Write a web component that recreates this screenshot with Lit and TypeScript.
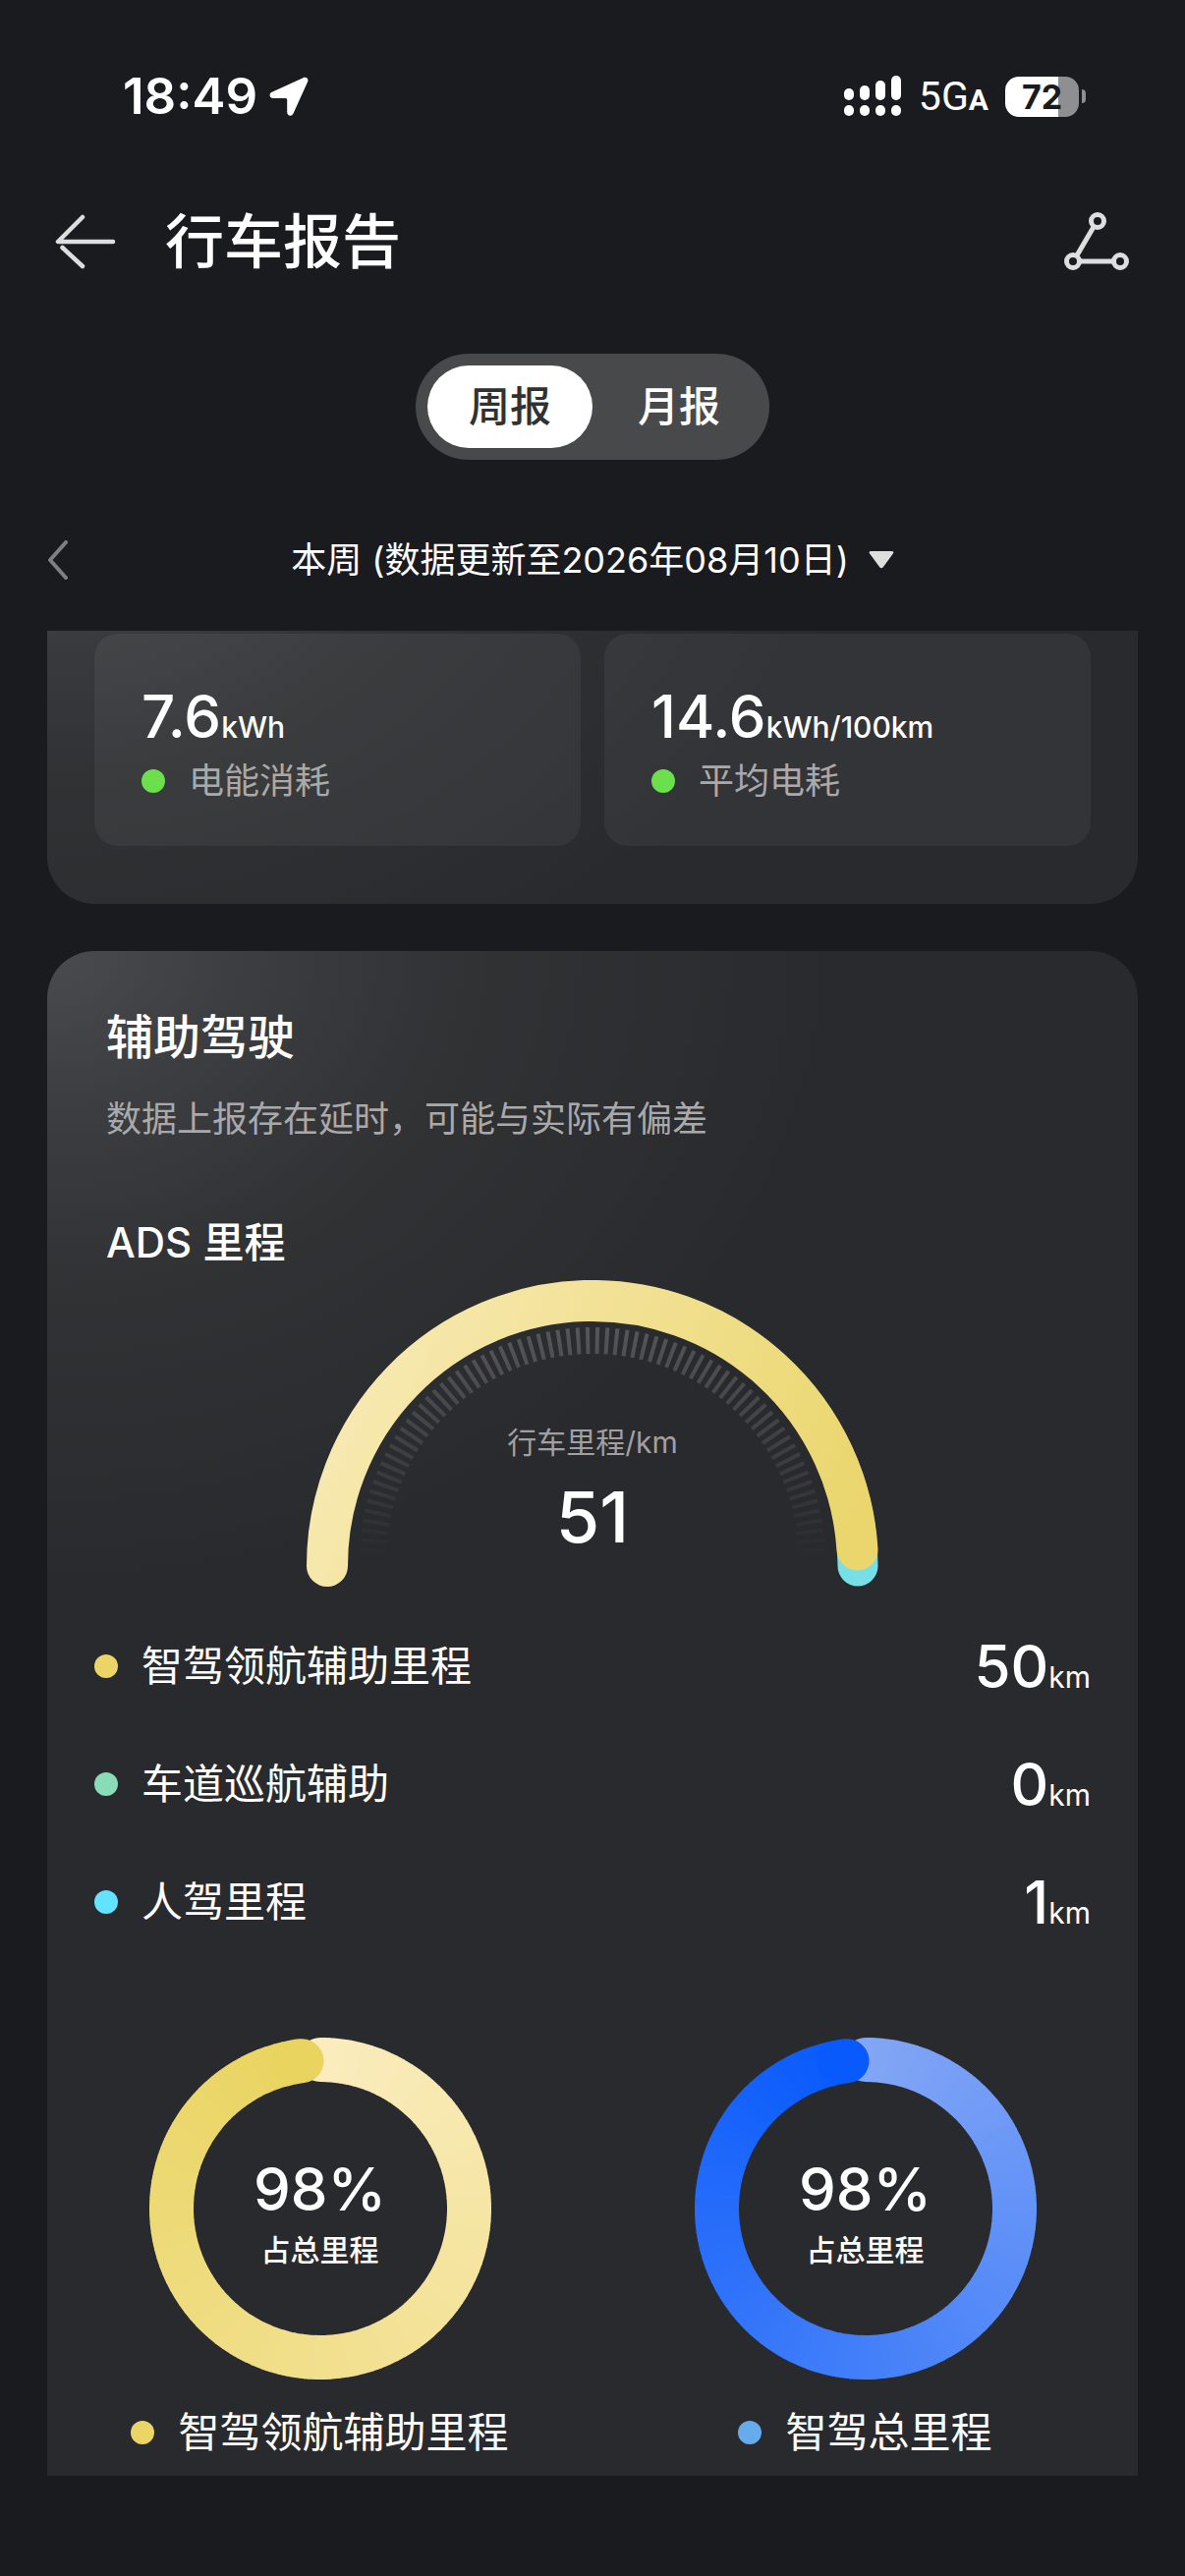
import { LitElement, html, svg, css } from "lit";
import { customElement, property, state } from "lit/decorators.js";
import { classMap } from "lit/directives/class-map.js";

type Rgb = [number, number, number];

const mix = (a: Rgb, b: Rgb, t: number) =>
  `rgb(${a.map((v, i) => Math.round(v + (b[i] - v) * t)).join(",")})`;

/** Point on a circle; 0 degrees is twelve o'clock, growing clockwise. */
const polar = (cx: number, cy: number, r: number, deg: number) => {
  const a = ((deg - 90) * Math.PI) / 180;
  return `${(cx + r * Math.cos(a)).toFixed(2)} ${(cy + r * Math.sin(a)).toFixed(2)}`;
};

const arc = (cx: number, cy: number, r: number, from: number, to: number) =>
  `M${polar(cx, cy, r, from)}A${r} ${r} 0 ${to - from > 180 ? 1 : 0} 1 ${polar(cx, cy, r, to)}`;

@customElement("status-bar")
class StatusBar extends LitElement {
  static styles = css`
    :host {
      display: flex;
      align-items: center;
      justify-content: space-between;
      height: 64px;
      padding: 66px 101px 0 125px;
      color: #fff;
    }
    .side {
      display: flex;
      align-items: center;
    }
    .time {
      font-size: 51px;
      font-weight: 600;
      line-height: 64px;
    }
    .arrow {
      width: 40px;
      height: 40px;
      margin-left: 12px;
    }
    .signal {
      width: 58px;
      height: 42px;
    }
    .network {
      margin-left: 18px;
      font-family: "Roboto", sans-serif;
      font-size: 41px;
      line-height: 64px;
    }
    .network small {
      font-size: 30px;
      font-weight: 700;
      line-height: 30px;
    }
    .battery {
      display: grid;
      place-items: center;
      width: 75px;
      height: 41px;
      margin-left: 17px;
      border-radius: 14px;
      background: linear-gradient(90deg, #fff 72%, #8e8f91 72%);
      color: #1a1b1f;
      font-size: 34px;
      font-weight: 700;
      line-height: 41px;
    }
    .tip {
      width: 4px;
      height: 14px;
      margin-left: 3px;
      border-radius: 0 4px 4px 0;
      background: #8e8f91;
    }
  `;

  render() {
    const bars = [13, 10, 5, 0];
    return html`
      <div class="side">
        <span class="time">18:49</span>
        <svg class="arrow" viewBox="0 0 40 40" aria-hidden="true">
          <path d="M34.5 1.2C37.800 -.3 40.500 2.200 39 5.500L24.500 37.500C23 41 18.200 40 18.200 36.300V23.500Q18.200 22 16.700 22H4C.2 22 -.8 17.300 2.700 15.700Z" fill="#fff" />
        </svg>
      </div>
      <div class="side">
        <svg class="signal" viewBox="0 0 58 42" fill="#fff" aria-hidden="true">
          ${bars.map(
            (y, i) => svg`
              <rect x=${i * 16} y=${y} width="10" height=${25 - y} rx="5" />
              <rect x=${i * 16} y="30" width="10" height="11" rx="5" />`
          )}
        </svg>
        <span class="network">5G<small>A</small></span>
        <span class="battery">72</span>
        <span class="tip"></span>
      </div>
    `;
  }
}

@customElement("mileage-gauge")
class MileageGauge extends LitElement {
  @property({ type: Number }) total = 0;
  @property({ type: Number }) assisted = 0;

  static styles = css`
    :host {
      display: grid;
      justify-items: center;
    }
    .dial,
    .caption {
      grid-area: 1 / 1;
    }
    .dial {
      width: 582px;
      max-width: 100%;
    }
    .caption {
      align-self: end;
      display: grid;
      gap: 16px;
      padding-bottom: 30px;
      text-align: center;
    }
    .label {
      color: #a0a0a2;
      font-size: 30px;
      line-height: 36px;
    }
    .value {
      font-size: 72px;
      font-weight: 500;
      line-height: 84px;
    }
  `;

  render() {
    const end = -90 + 180 * (this.assisted / this.total);
    const count = 72;
    const step = 180 / (count + 1);
    const ticks = Array.from({ length: count }, (_, i) => (i - (count - 1) / 2) * step);
    return html`
      <svg class="dial" viewBox="0 0 582 313" fill="none" aria-hidden="true">
        <defs>
          <linearGradient id="gold" gradientUnits="userSpaceOnUse" x1="30" y1="60" x2="540" y2="290">
            <stop offset="0" stop-color="#f8eab5" />
            <stop offset="1" stop-color="#ead66c" />
          </linearGradient>
          <linearGradient id="fade" gradientUnits="userSpaceOnUse" x1="0" y1="48" x2="0" y2="285">
            <stop offset="0" stop-color="#fff" stop-opacity=".2" />
            <stop offset=".5" stop-color="#fff" stop-opacity=".1" />
            <stop offset="1" stop-color="#fff" stop-opacity="0" />
          </linearGradient>
        </defs>
        <path
          d=${ticks.map((t) => `M${polar(291, 285, 237, t)}L${polar(291, 285, 210, t)}`).join("")}
          stroke="url(#fade)"
          stroke-width="4"
        />
        <path d=${arc(291, 291, 270, 60, 90)} stroke="#77dfe6" stroke-width="41" stroke-linecap="round" />
        <path d=${arc(291, 291, 270, -90, end)} stroke="url(#gold)" stroke-width="42" stroke-linecap="round" />
      </svg>
      <div class="caption">
        <span class="label">行车里程/km</span>
        <span class="value">${this.total}</span>
      </div>
    `;
  }
}

@customElement("share-ring")
class ShareRing extends LitElement {
  @property({ type: Number }) percent = 0;
  @property() label = "";
  @property({ attribute: false }) from: Rgb = [0, 0, 0];
  @property({ attribute: false }) to: Rgb = [0, 0, 0];
  @property() dot = "";

  static styles = css`
    :host {
      display: grid;
      justify-items: center;
      gap: 24px;
    }
    .chart {
      display: grid;
      place-items: center;
    }
    .ring,
    .caption {
      grid-area: 1 / 1;
    }
    .ring {
      width: 348px;
      max-width: 100%;
    }
    .caption {
      display: grid;
      gap: 8px;
      padding-top: 4px;
      text-align: center;
    }
    .value {
      font-size: 60px;
      font-weight: 500;
      line-height: 72px;
    }
    .note {
      font-size: 30px;
      font-weight: 500;
      line-height: 36px;
    }
    .legend {
      display: flex;
      align-items: center;
      gap: 24px;
      font-size: 42px;
      line-height: 60px;
    }
    .dot {
      width: 24px;
      height: 24px;
      border-radius: 50%;
    }
  `;

  render() {
    const sweep = this.percent * 3.6;
    const count = 120;
    const seg = sweep / count;
    return html`
      <div class="chart">
        <svg class="ring" viewBox="0 0 348 348" fill="none" aria-hidden="true">
          <path d=${arc(174, 174, 151.5, 0, 1)} stroke=${mix(this.from, this.to, 0)} stroke-width="45" stroke-linecap="round" />
          ${Array.from({ length: count }, (_, i) => {
            const last = i === count - 1;
            return svg`<path
              d=${arc(174, 174, 151.5, i * seg, (i + 1) * seg + (last ? 0 : 0.4))}
              stroke=${mix(this.from, this.to, i / (count - 1))}
              stroke-width="45"
              stroke-linecap=${last ? "round" : "butt"} />`;
          })}
        </svg>
        <div class="caption">
          <span class="value">${this.percent}%</span>
          <span class="note">占总里程</span>
        </div>
      </div>
      <div class="legend">
        <span class="dot" style="background:${this.dot}"></span>
        <span>${this.label}</span>
      </div>
    `;
  }
}

@customElement("app-root")
class AppRoot extends LitElement {
  @state() private period = "周报";

  private usage = [
    { value: "7.6", unit: "kWh", label: "电能消耗" },
    { value: "14.6", unit: "kWh/100km", label: "平均电耗" },
  ];

  private mileage = [
    { label: "智驾领航辅助里程", value: 50, color: "#ead566" },
    { label: "车道巡航辅助", value: 0, color: "#8adcb8" },
    { label: "人驾里程", value: 1, color: "#62e3ff" },
  ];

  static styles = css`
    :host {
      display: flex;
      flex-direction: column;
      box-sizing: border-box;
      min-height: 100vh;
      padding-bottom: 102px;
      background: #1a1b1f;
      color: #fff;
      font-family: "Inter", "Noto Sans CJK SC", sans-serif;
    }
    button {
      padding: 0;
      border: 0;
      background: none;
      color: inherit;
      font: inherit;
      cursor: pointer;
    }
    svg {
      display: block;
    }
    h1,
    h2,
    h3,
    p,
    ul {
      margin: 0;
      padding: 0;
    }
    .header {
      display: flex;
      align-items: center;
      height: 104px;
      padding: 0 56px;
      margin-top: 64px;
    }
    .title {
      flex: 1;
      margin-left: 50px;
      font-size: 60px;
      font-weight: 500;
      line-height: 72px;
    }
    .tabs {
      display: flex;
      gap: 4px;
      align-self: center;
      padding: 12px 8px 12px 12px;
      margin-top: 62px;
      border-radius: 54px;
      background: #48494b;
    }
    .tab {
      width: 168px;
      height: 84px;
      border-radius: 42px;
      font-size: 42px;
      font-weight: 500;
      line-height: 84px;
    }
    .tab.active {
      background: #fff;
      color: #303133;
    }
    .range {
      display: flex;
      align-items: center;
      padding: 0 48px;
      margin: 78px 0 48px;
    }
    .spacer {
      width: 22px;
    }
    .pick {
      flex: 1;
      display: flex;
      align-items: center;
      justify-content: center;
      gap: 20px;
      font-size: 36px;
      line-height: 48px;
    }
    .report {
      flex: 1;
      display: flex;
      flex-direction: column;
      gap: 48px;
      padding: 0 48px;
    }
    .card {
      background: radial-gradient(ellipse 820px 660px at 0 0, #494b4f, #3b3d40 25%, #303234 52%, #292a2d) #292a2d;
    }
    .energy {
      display: grid;
      grid-template-columns: 1fr 1fr;
      gap: 24px;
      padding: 3px 48px 59px;
      border-radius: 0 0 48px 48px;
      background-image: radial-gradient(ellipse 820px 620px at 0 -180px, #494b4f, #3b3d40 25%, #303234 52%, #292a2d);
    }
    .tile {
      display: grid;
      gap: 6px;
      padding: 48px 48px 42px;
      border-radius: 24px;
      background: rgba(255, 255, 255, 0.05);
    }
    .figure {
      font-size: 60px;
      font-weight: 500;
      line-height: 72px;
    }
    .unit {
      font-size: 30px;
      line-height: 30px;
    }
    .caption {
      display: flex;
      align-items: center;
      gap: 24px;
      color: #a9a9ab;
      font-size: 36px;
      line-height: 48px;
    }
    .dot {
      width: 24px;
      height: 24px;
      border-radius: 50%;
    }
    .green {
      background: #6be04c;
    }
    .driving {
      flex: 1;
      padding: 52px 48px 14px;
      border-radius: 48px 48px 0 0;
    }
    .intro {
      padding: 0 12px 8px;
    }
    .heading {
      font-size: 48px;
      font-weight: 500;
      line-height: 72px;
    }
    .hint {
      margin-top: 23px;
      color: #a9a9ab;
      font-size: 36px;
      line-height: 48px;
    }
    .subheading {
      margin-top: 72px;
      font-size: 42px;
      font-weight: 500;
      line-height: 60px;
    }
    .list {
      margin-top: 20px;
      list-style: none;
    }
    .row {
      display: flex;
      align-items: center;
      gap: 24px;
      height: 120px;
    }
    .name {
      flex: 1;
      font-size: 42px;
      line-height: 60px;
    }
    .row .unit {
      font-weight: 400;
    }
    .rings {
      display: grid;
      grid-template-columns: 1fr 1fr;
      margin: 78px -48px 0;
    }
  `;

  render() {
    return html`
      <status-bar></status-bar>
      <header class="header">
        <button aria-label="返回">
          <svg width="62" height="56" viewBox="0 0 62 56" fill="none" stroke="#dedede" stroke-width="4.500" stroke-linecap="round" aria-hidden="true">
            <path d="M28 3L3 28H59" stroke-linejoin="round" />
            <path d="M7.500 34L28 53" />
          </svg>
        </button>
        <h1 class="title">行车报告</h1>
        <button aria-label="分享">
          <svg width="68" height="60" viewBox="0 0 68 60" fill="none" stroke="#dedede" stroke-width="5" aria-hidden="true">
            <circle cx="35" cy="9" r="6.500" />
            <circle cx="10" cy="50" r="6.500" />
            <circle cx="58" cy="50" r="6.500" />
            <path d="M31 15L14 44M17 50H51" />
          </svg>
        </button>
      </header>
      <div class="tabs" role="tablist">
        ${["周报", "月报"].map(
          (name) => html`<button
            class=${classMap({ tab: true, active: this.period === name })}
            role="tab"
            aria-selected=${this.period === name}
            @click=${() => (this.period = name)}
          >${name}</button>`
        )}
      </div>
      <div class="range">
        <button aria-label="上一周">
          <svg width="22" height="40" viewBox="0 0 22 40" fill="none" stroke="#7e7f81" stroke-width="4" stroke-linecap="round" stroke-linejoin="round" aria-hidden="true">
            <path d="M19 2L3 20L19 38" />
          </svg>
        </button>
        <button class="pick">
          <span>本周 (数据更新至2026年08月10日)</span>
          <svg width="26" height="18" viewBox="0 0 26 18" aria-hidden="true">
            <path d="M3 0H23Q27 0 24.500 3L15 16Q13 18.500 11 16L1.500 3Q-1 0 3 0Z" fill="#dedede" />
          </svg>
        </button>
        <span class="spacer"></span>
      </div>
      <main class="report">
        <section class="card energy">
          ${this.usage.map(
            (item) => html`<div class="tile">
              <div class="figure">${item.value}<span class="unit">${item.unit}</span></div>
              <div class="caption"><span class="dot green"></span><span>${item.label}</span></div>
            </div>`
          )}
        </section>
        <section class="card driving">
          <div class="intro">
            <h2 class="heading">辅助驾驶</h2>
            <p class="hint">数据上报存在延时，可能与实际有偏差</p>
            <h3 class="subheading">ADS 里程</h3>
          </div>
          <mileage-gauge total="51" assisted="50"></mileage-gauge>
          <ul class="list">
            ${this.mileage.map(
              (item) => html`<li class="row">
                <span class="dot" style="background:${item.color}"></span>
                <span class="name">${item.label}</span>
                <span class="figure">${item.value}<span class="unit">km</span></span>
              </li>`
            )}
          </ul>
          <div class="rings">
            <share-ring percent="98" label="智驾领航辅助里程" dot="#ead566" .from=${[250, 236, 189]} .to=${[233, 212, 96]}></share-ring>
            <share-ring percent="98" label="智驾总里程" dot="#66abec" .from=${[130, 166, 245]} .to=${[8, 90, 252]}></share-ring>
          </div>
        </section>
      </main>
    `;
  }
}
